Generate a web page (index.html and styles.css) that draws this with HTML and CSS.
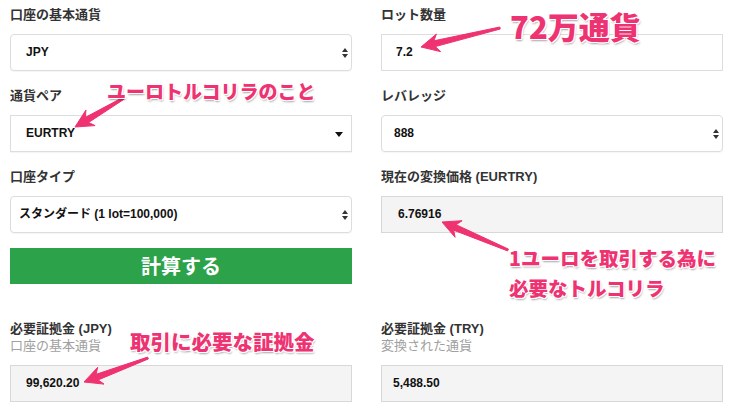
FILE: index.html
```html
<!DOCTYPE html>
<html lang="ja">

<head>
    <meta charset="utf-8">
    <title>証拠金計算</title>
    <link rel="stylesheet" href="styles.css">
</head>

<body>
    <div id="page">
        <div id="calc">
            <div class="field">
                <div class="label">口座の基本通貨</div>
                <div class="box select">JPY<span class="updown"></span></div>
            </div>
            <div class="field">
                <div class="label">ロット数量</div>
                <div class="box input pad-14">7.2</div>
            </div>

            <div class="field">
                <div class="label">通貨ペア</div>
                <div class="box select square">EURTRY<span class="down"></span></div>
            </div>
            <div class="field">
                <div class="label">レバレッジ</div>
                <div class="box select pad-12">888<span class="updown"></span></div>
            </div>

            <div class="field">
                <div class="label">口座タイプ</div>
                <div class="box select pad-8">スタンダード (1 lot=100,000)<span class="updown"></span></div>
            </div>
            <div class="field">
                <div class="label">現在の変換価格 (EURTRY)</div>
                <div class="box output pad-16">6.76916</div>
            </div>

            <button class="button">計算する</button>
            <div></div>

            <div class="field result">
                <div class="label">必要証拠金 (JPY)</div>
                <div class="sub">口座の基本通貨</div>
                <div class="box output">99,620.20</div>
            </div>
            <div class="field result">
                <div class="label">必要証拠金 (TRY)</div>
                <div class="sub">変換された通貨</div>
                <div class="box output pad-11">5,488.50</div>
            </div>
        </div>

        <!-- notes drawn over the form -->
        <svg class="arrows" width="730" height="411" viewBox="0 0 730 411">
            <polygon points="499.8,27 433.9,40.8 436.4,34.1 421,47 440.6,51.6 435.3,46.6 500.2,29" />
            <polygon points="123.5,97.1 85.5,117.3 85.9,110.1 75,127 95.1,125.6 88.6,122.5 124.5,98.9" />
            <polygon points="508.4,249.1 456.1,224.7 462.1,220.7 442,222 455.1,237.3 453.7,230.2 507.6,250.9" />
            <polygon points="147.6,357.1 96.1,374.3 97.7,367.3 84,382 104,384.1 98.2,379.9 148.4,358.9" />
        </svg>
        <div class="note note-lot">72万通貨</div>
        <div class="note note-pair">ユーロトルコリラのこと</div>
        <div class="note note-rate">1ユーロを取引する為に<br>必要なトルコリラ</div>
        <div class="note note-margin">取引に必要な証拠金</div>
    </div>
</body>

</html>
```

FILE: styles.css
```css
body {
    margin: 0;
    padding: 0;
    background-color: #fff;
    font-family: "Liberation Sans", "Noto Sans CJK JP", sans-serif;
    color: #222;
}

#page {
    position: relative;
    width: 730px;
    height: 411px;
    overflow: hidden;
}

#calc {
    display: grid;
    grid-template-columns: 342px 342px;
    column-gap: 29px;
    padding: 5px 0 0 10px;
}

.field {
    margin-bottom: 15px;
}

.label {
    font-size: 13px;
    font-weight: bold;
    line-height: 20px;
    height: 20px;
    margin-bottom: 9px;
    color: #333;
}

.result .label {
    margin-bottom: 0;
}

.sub {
    font-size: 13px;
    line-height: 14px;
    color: #a0a0a0;
    margin-bottom: 12px;
}

.box {
    position: relative;
    box-sizing: border-box;
    height: 37px;
    line-height: 35px;
    padding: 0 15px;
    border: 1px solid #ddd;
    font-size: 12px;
    font-weight: bold;
    color: #111;
}

.select {
    border-radius: 4px;
    background-color: #fff;
    box-shadow: 0 1px 1px rgba(0, 0, 0, 0.04);
}

.select.square {
    border-radius: 0;
}

.input {
    background-color: #fff;
}

.output {
    background-color: #f4f4f4;
    border-color: #d8d8d8;
}

.pad-8 { padding-left: 8px; }
.pad-11 { padding-left: 11px; }
.pad-12 { padding-left: 12px; }
.pad-14 { padding-left: 14px; }
.pad-16 { padding-left: 16px; }

.updown,
.down {
    position: absolute;
    right: 6px;
    top: 50%;
    width: 0;
    height: 0;
}

.updown::before,
.updown::after {
    content: "";
    position: absolute;
    left: -3px;
    border-left: 3px solid transparent;
    border-right: 3px solid transparent;
}

.updown::before {
    top: -5px;
    border-bottom: 4px solid #333;
}

.updown::after {
    top: 1px;
    border-top: 4px solid #333;
}

.down {
    right: 8px;
    margin-top: -2px;
    border-left: 4px solid transparent;
    border-right: 4px solid transparent;
    border-top: 5px solid #111;
}

.button {
    display: block;
    width: 342px;
    height: 36px;
    margin: 0 0 35px;
    padding: 0;
    border: none;
    background-color: #2ca24a;
    color: #fff;
    font-family: "Noto Sans CJK JP", sans-serif;
    font-size: 20px;
    font-weight: bold;
    line-height: 36px;
    cursor: pointer;
}

.arrows {
    position: absolute;
    left: 0;
    top: 0;
    pointer-events: none;
}

.arrows polygon {
    fill: #ef3270;
    stroke: #ef3270;
    stroke-width: 1;
    stroke-linejoin: round;
}

.note {
    position: absolute;
    font-family: "Noto Sans CJK JP", sans-serif;
    font-weight: 900;
    color: #ee3373;
    white-space: nowrap;
    text-shadow: 1px 0 0 #fff, -1px 0 0 #fff, 0 1px 0 #fff, 0 -1px 0 #fff,
        1px 1px 0 #fff, -1px -1px 0 #fff, 1px -1px 0 #fff, -1px 1px 0 #fff,
        1px 2px 2px rgba(0, 0, 0, 0.35);
}

.note-lot {
    left: 510px;
    top: 7px;
    font-size: 31px;
    line-height: 38px;
}

.note-pair {
    left: 107px;
    top: 79px;
    font-size: 19px;
    line-height: 24px;
}

.note-rate {
    left: 509px;
    top: 243px;
    font-size: 19.5px;
    line-height: 30px;
}

.note-margin {
    left: 130px;
    top: 329px;
    font-size: 20.5px;
    line-height: 24px;
}
```
